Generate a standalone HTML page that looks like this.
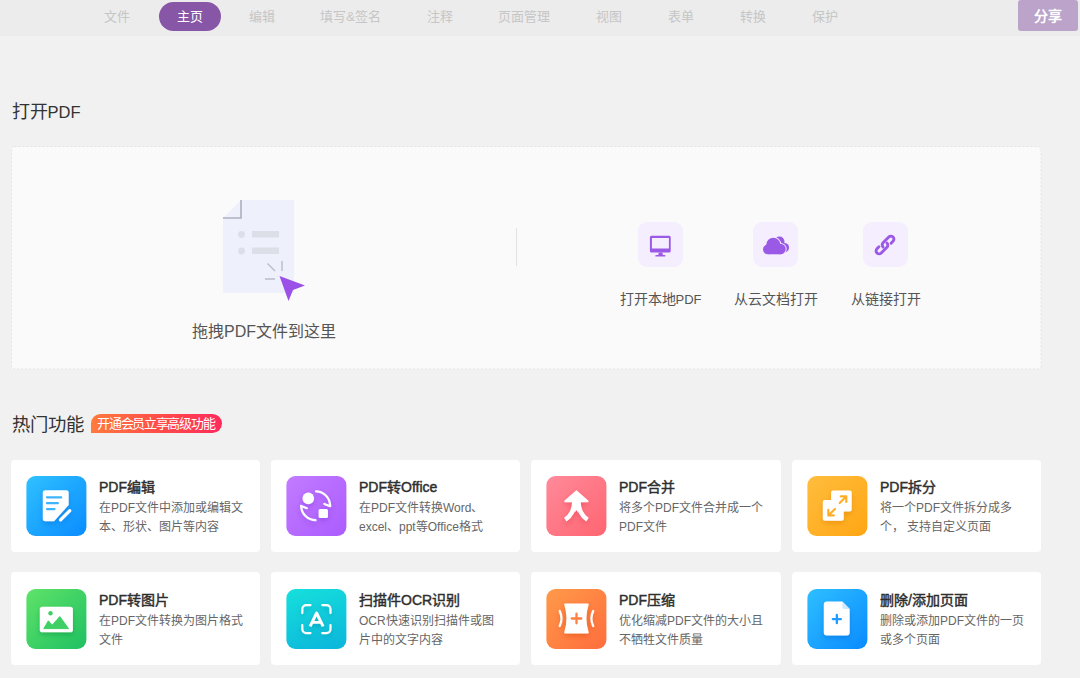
<!DOCTYPE html>
<html lang="zh-CN">
<head>
<meta charset="utf-8">
<title>PDF</title>
<style>
*{box-sizing:border-box;margin:0;padding:0}
html,body{width:1080px;height:678px;overflow:hidden}
body{background:#f1f1f1;font-family:"Liberation Sans",sans-serif;color:#333;position:relative}
.nav{position:absolute;left:0;top:0;width:1080px;height:36px;background:#ececec}
.nav span{position:absolute;top:0;height:33px;line-height:33px;font-size:13px;color:#c6c6c6;white-space:nowrap;transform:translateX(-50%)}
.nav .act{top:2px;height:29px;line-height:29px;width:62px;border-radius:15px;background:#8856a6;color:#fff;text-align:center;font-size:13px}
.share{position:absolute;left:1018px;top:0;width:60px;height:31px;line-height:33px;background:#bba3ca;border-radius:3px;color:#fff;font-size:14px;font-weight:bold;text-align:center}
h2{position:absolute;left:11.500px;font-size:18px;font-weight:normal;color:#333;line-height:24px;white-space:nowrap}
.drop{position:absolute;left:11px;top:146.200px;width:1030.500px;height:223.500px}
.dz{position:absolute;font-size:16px;color:#555;white-space:nowrap;transform:translateX(-50%);line-height:22px}
.vline{position:absolute;left:516px;top:228px;width:1px;height:38px;background:#e2e2e2}
.ib{position:absolute;top:222px;width:45px;height:45px;border-radius:9px;background:#f5eefe}
.il{position:absolute;top:289px;font-size:14px;line-height:20px;color:#555;white-space:nowrap;transform:translateX(-50%)}
.badge{position:absolute;left:91px;top:414px;width:131px;height:19px;line-height:19px;border-radius:10px 10px 10px 0;background:linear-gradient(90deg,#ff7a3d 0%,#ff4a4a 55%,#ff2a5c 100%);color:#fff;font-size:13px;letter-spacing:-1.3px;text-align:center;white-space:nowrap;padding-right:1.500px}
.card{position:absolute;width:249px;height:92px;background:#fff;border-radius:4px}
.r2{height:93px}
.r2 .ic,.r2 b,.r2 p{margin-top:1px}
.card .ic{position:absolute;left:15px;transform:translateX(.400px);top:16px;width:60px;height:60px;border-radius:9px}
.card b{position:absolute;left:88px;top:16.500px;font-size:14px;line-height:20px;color:#2e2e2e;font-weight:normal;-webkit-text-stroke:.450px #2e2e2e;white-space:nowrap}
.card p{position:absolute;left:88px;top:39px;width:160px;white-space:nowrap;font-size:12px;line-height:19px;color:#666}
</style>
</head>
<body>
<div class="nav">
<span style="left:117px">文件</span>
<span class="act" style="left:190px">主页</span>
<span style="left:262px">编辑</span>
<span style="left:350.500px">填写&amp;签名</span>
<span style="left:440px">注释</span>
<span style="left:524.300px">页面管理</span>
<span style="left:609px">视图</span>
<span style="left:681px">表单</span>
<span style="left:753px">转换</span>
<span style="left:825px">保护</span>
<div class="share">分享</div>
</div>

<h2 style="top:100px">打开<span style="font-size:16.500px">PDF</span></h2>
<svg class="drop" viewBox="0 0 1030.500 223.500"><rect x=".500" y=".500" width="1029.500" height="222.500" rx="3" fill="#fafafa" stroke="#e3e3e3" stroke-width="1" stroke-dasharray="2 2"/></svg>

<svg style="position:absolute;left:215px;top:195px" width="100" height="115" viewBox="0 0 100 115">
<path d="M26 5H79V98H8V23Z" fill="#eef0fb"/>
<path d="M8 23H26V5" fill="none" stroke="#adb0c0" stroke-width="1.6"/>
<circle cx="26.5" cy="39.5" r="3.4" fill="#dcdee8"/>
<rect x="37" y="36" width="27" height="6.5" fill="#dcdee8"/>
<circle cx="26.5" cy="56" r="3.4" fill="#dcdee8"/>
<rect x="37" y="52.5" width="27" height="6.5" fill="#dcdee8"/>
<path d="M52.5 68.500L60 76M67 66V76M50 84H60" stroke="#b9bccb" stroke-width="1.4" fill="none"/>
<path d="M64.500 81L90 90.500L78 95L73.500 106Z" fill="#9b51e8"/>
</svg>
<div class="dz" style="left:264px;top:321px">拖拽PDF文件到这里</div>
<div class="vline"></div>

<div class="ib" style="left:638px"><svg width="45" height="45" viewBox="0 0 45 45"><path fill-rule="evenodd" fill="#9b5ae6" d="M13.400 13.700H31.200a1.500 1.500 0 0 1 1.500 1.500V29a1.500 1.500 0 0 1 -1.500 1.500H13.400a1.500 1.500 0 0 1 -1.500 -1.500V15.200a1.500 1.500 0 0 1 1.500 -1.500ZM13.900 15.900V26.500H30.900V15.900Z"/><path fill="#9b5ae6" d="M20.800 30.400H24.400L24.900 32.900H26.600a0.850 0.850 0 0 1 0 1.700H18.100a0.850 0.850 0 0 1 0 -1.700H20.300Z"/></svg></div>
<div class="ib" style="left:753px"><svg width="45" height="45" viewBox="0 0 45 45"><g fill="#9b5ae6"><circle cx="26.400" cy="19.600" r="5.100"/><circle cx="31.300" cy="25.700" r="4.800"/><rect x="24" y="22" width="8" height="8.500"/></g><g fill="#f5eefe" stroke="#f5eefe" stroke-width="1.800"><circle cx="20.300" cy="22.700" r="7"/><circle cx="14.850" cy="27.450" r="4.850"/><circle cx="27.500" cy="27.050" r="5.250"/></g><g fill="#9b5ae6"><circle cx="20.300" cy="22.700" r="7"/><circle cx="14.850" cy="27.450" r="4.850"/><circle cx="27.500" cy="27.050" r="5.250"/><rect x="14.850" y="26" width="12.650" height="6.300"/></g></svg></div>
<div class="ib" style="left:863px"><svg width="45" height="45" viewBox="0 0 45 45"><g transform="translate(22 23) rotate(-45)" fill="none" stroke="#9b5ae6" stroke-width="2.900" stroke-linecap="round"><path d="M-2.750 0A3 3 0 0 1 0.250 -3H8.350A3 3 0 0 1 8.350 3H5.600"/><path d="M2.750 0A3 3 0 0 1 -0.250 3H-8.350A3 3 0 0 1 -8.350 -3H-5.600"/></g></svg></div>
<div class="il" style="left:660.500px">打开本地<span style="font-size:13px">PDF</span></div>
<div class="il" style="left:776px">从云文档打开</div>
<div class="il" style="left:886px">从链接打开</div>

<h2 style="top:413px;font-size:18.400px">热门功能</h2>
<div class="badge">开通会员立享高级功能</div>

<div class="card" style="left:11px;top:460px"><div class="ic" style="background:linear-gradient(135deg,#2fc1ff,#0a8cff)"><svg width="60" height="60" viewBox="-0.100 -0.600 60 60"><defs><filter id="s1" x="-30%" y="-30%" width="160%" height="170%"><feDropShadow dx="0" dy="2.500" stdDeviation="2.600" flood-color="#0066d0" flood-opacity=".42"/></filter></defs><g filter="url(#s1)"><path fill="#fff" d="M18.800 13.600H39.700a2.500 2.500 0 0 1 2.500 2.500V28.500L27.600 44.600H18.800a2.500 2.500 0 0 1 -2.500 -2.500V16.100a2.500 2.500 0 0 1 2.500 -2.500Z"/><path d="M43.300 34.100L34.100 43.300" stroke="#fff" stroke-width="3.200" stroke-linecap="round"/></g><path d="M20.500 20.700H34.700M20.500 26.600H31.300M20.500 32.500H28" stroke="#3db4ff" stroke-width="2.300" stroke-linecap="round"/></svg></div><b>PDF编辑</b><p>在PDF文件中添加或编辑文<br>本、形状、图片等内容</p></div>
<div class="card" style="left:271px;top:460px"><div class="ic" style="background:linear-gradient(135deg,#c27bff,#ab5cff)"><svg width="60" height="60" viewBox="-0.100 -0.600 60 60"><defs><filter id="s2" x="-30%" y="-30%" width="160%" height="170%"><feDropShadow dx="0" dy="2.500" stdDeviation="2.600" flood-color="#7a2fd0" flood-opacity=".42"/></filter></defs><g filter="url(#s2)"><circle cx="21.800" cy="21.800" r="5.800" fill="#fff"/><rect x="32.100" y="32.400" width="9.400" height="9" rx="1.600" fill="#fff"/><g fill="none" stroke="#fff" stroke-width="2.200" stroke-linecap="round" stroke-linejoin="round"><path d="M29.500 14.700A14.500 14.500 0 0 1 43.600 29.400"/><path d="M37.800 27.300L43.700 29.600"/><path d="M29 43.600A14.500 14.500 0 0 1 14.700 29.600"/><path d="M20.300 31.600L14.600 29.400"/></g></g></svg></div><b>PDF转Office</b><p>在PDF文件转换Word、<br>excel、ppt等Office格式</p></div>
<div class="card" style="left:531px;top:460px;width:250px"><div class="ic" style="background:linear-gradient(135deg,#ff8a9b,#ff6570)"><svg width="60" height="60" viewBox="-0.100 -0.600 60 60"><defs><filter id="s3" x="-30%" y="-30%" width="160%" height="170%"><feDropShadow dx="0" dy="2.500" stdDeviation="2.600" flood-color="#e03048" flood-opacity=".42"/></filter></defs><g filter="url(#s3)"><path fill="#fff" stroke="#fff" stroke-width="2" stroke-linejoin="round" d="M29.900 14.800L41 24.700H18.800Z"/><path fill="none" stroke="#fff" stroke-width="4.400" stroke-linecap="butt" d="M27.800 25C27.800 33 25 39 18.800 43M32 25C32 33 34.800 39 41 43"/><path fill="#fff" d="M26 25H33.800L31.500 36L29.900 33.500L28.300 36Z"/></g></svg></div><b>PDF合并</b><p>将多个PDF文件合并成一个<br>PDF文件</p></div>
<div class="card" style="left:792px;top:460px"><div class="ic" style="background:linear-gradient(135deg,#ffbd3d,#ffa614)"><svg width="60" height="60" viewBox="-0.100 -0.600 60 60"><defs><filter id="s4" x="-30%" y="-30%" width="160%" height="170%"><feDropShadow dx="0" dy="2.500" stdDeviation="2.600" flood-color="#d07800" flood-opacity=".42"/></filter></defs><g filter="url(#s4)" fill="#fff"><rect x="23.600" y="13.900" width="20.600" height="20.900" rx="2"/><rect x="15.300" y="23.400" width="21" height="20.800" rx="2"/></g><g fill="none" stroke="#ffad26" stroke-width="2.100" stroke-linecap="round" stroke-linejoin="round"><path d="M32.200 26.300L38.600 20M33.300 19.800H38.800V25.300"/><path d="M27.500 32.300L21 38.600M26.300 38.800H20.800V33.300"/></g></svg></div><b>PDF拆分</b><p>将一个PDF文件拆分成多<br>个， 支持自定义页面</p></div>

<div class="card r2" style="left:11px;top:572px"><div class="ic" style="background:linear-gradient(135deg,#5fe368,#1fc063)"><svg width="60" height="60" viewBox="-0.100 -0.600 60 60"><defs><filter id="s5" x="-30%" y="-30%" width="160%" height="170%"><feDropShadow dx="0" dy="2.500" stdDeviation="2.600" flood-color="#0a8a40" flood-opacity=".42"/></filter></defs><rect filter="url(#s5)" x="13.300" y="17.100" width="33.100" height="25.600" rx="2.600" fill="#fff"/><circle cx="24" cy="23.600" r="2.200" fill="#3fd065"/><path fill="#3fd065" stroke="#3fd065" stroke-width="1" stroke-linejoin="round" d="M17.300 39L21.900 31.200L25.700 35.600L33.300 27L42 39Z"/></svg></div><b>PDF转图片</b><p>在PDF文件转换为图片格式<br>文件</p></div>
<div class="card r2" style="left:271px;top:572px"><div class="ic" style="background:linear-gradient(160deg,#16e0dc,#0bb5db)"><svg width="60" height="60" viewBox="-0.100 -0.600 60 60"><defs><filter id="s6" x="-30%" y="-30%" width="160%" height="170%"><feDropShadow dx="0" dy="2.500" stdDeviation="2.600" flood-color="#007f9c" flood-opacity=".42"/></filter></defs><g filter="url(#s6)"><g fill="none" stroke="#fff" stroke-width="2.200" stroke-linecap="round"><path d="M15.800 23.500V19.500a4 4 0 0 1 4 -4H24"/><path d="M35.800 15.500H40a4 4 0 0 1 4 4V23.500"/><path d="M44 35.500V39.500a4 4 0 0 1 -4 4H35.800"/><path d="M24 43.500H19.800a4 4 0 0 1 -4 -4V35.500"/></g><path fill="none" stroke="#fff" stroke-width="2.900" stroke-linejoin="round" stroke-linecap="butt" d="M23.600 36.700L30.100 23.400L36.600 36.700M26 32.800H34.200"/></g></svg></div><b>扫描件OCR识别</b><p>OCR快速识别扫描件或图<br>片中的文字内容</p></div>
<div class="card r2" style="left:531px;top:572px;width:250px"><div class="ic" style="background:linear-gradient(135deg,#ff9a49,#ff6d3d)"><svg width="60" height="60" viewBox="-0.100 -0.600 60 60"><defs><filter id="s7" x="-30%" y="-30%" width="160%" height="170%"><feDropShadow dx="0" dy="2.500" stdDeviation="2.600" flood-color="#d8400a" flood-opacity=".42"/></filter></defs><g filter="url(#s7)"><path fill="#fff" d="M18.700 13.900H41.200a1 1 0 0 1 1 1.100Q37.600 28.900 42.200 42.800a1 1 0 0 1 -1 1.100H18.700a1 1 0 0 1 -1 -1.100Q22.300 28.900 17.700 15a1 1 0 0 1 1 -1.100Z"/><path fill="none" stroke="#fff" stroke-width="2.300" stroke-linecap="round" d="M13.200 21.400Q16.800 28.900 13.200 36.400M46.700 21.400Q43.100 28.900 46.700 36.400"/></g><path d="M25.200 28.900H34.800M30 24.100V33.700" stroke="#ff8040" stroke-width="2.300" stroke-linecap="round"/></svg></div><b>PDF压缩</b><p>优化缩减PDF文件的大小且<br>不牺牲文件质量</p></div>
<div class="card r2" style="left:792px;top:572px"><div class="ic" style="background:linear-gradient(135deg,#2ebfff,#0a8bff)"><svg width="60" height="60" viewBox="-0.100 -0.600 60 60"><defs><filter id="s8" x="-30%" y="-30%" width="160%" height="170%"><feDropShadow dx="0" dy="2.500" stdDeviation="2.600" flood-color="#0066d0" flood-opacity=".42"/></filter></defs><g filter="url(#s8)"><path fill="#fff" d="M19.300 11.800H34.800L42.200 19.500V43a3 3 0 0 1 -3 3H19.300a3 3 0 0 1 -3 -3V14.800a3 3 0 0 1 3 -3Z"/></g><path fill="#cfeaff" d="M34.800 11.800L42.200 19.500H36.800a2 2 0 0 1 -2 -2Z"/><path d="M25.300 29.450H33.400M29.350 25.300V33.600" stroke="#1e9cff" stroke-width="2.300" stroke-linecap="round"/></svg></div><b>删除/添加页面</b><p>删除或添加PDF文件的一页<br>或多个页面</p></div>
</body>
</html>
